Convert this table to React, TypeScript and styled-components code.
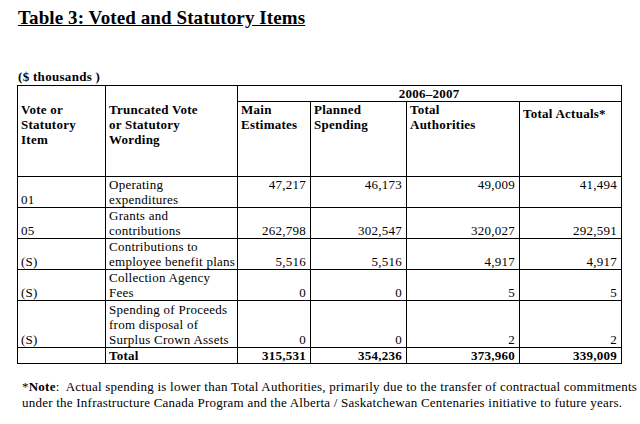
import React from "react";
import styled, { createGlobalStyle } from "styled-components";

const Global = createGlobalStyle`
  html, body { margin: 0; padding: 0; background: #fff; }
  body { font-family: "Liberation Serif", "Times New Roman", serif; color: #000; }
`;

const Page = styled.div`
  width: 640px;
  height: 424px;
  padding: 8px 0 0 0;
  box-sizing: border-box;
  overflow: hidden;
`;

const Title = styled.h1`
  margin: 0 0 0 18px;
  font-size: 19px;
  font-weight: bold;
  letter-spacing: 0.1px;
  text-decoration: underline;
  line-height: 20px;
`;

const Units = styled.div`
  margin: 42px 0 0 18px;
  font-size: 13px;
  font-weight: bold;
  letter-spacing: 0.3px;
  line-height: 14px;
`;

const Table = styled.table`
  margin: 1px 0 0 17px;
  border-collapse: collapse;
  table-layout: fixed;
  width: 604px;
  font-size: 13px;
  line-height: 15px;
  letter-spacing: 0.25px;
`;

const Cell = styled.td<{ $align?: "left" | "right" | "center"; $v?: "top" | "bottom"; $bold?: boolean; $pt?: number }>`
  border: 1px solid #000;
  padding: ${(p) => p.$pt ?? 0}px 4px 0 3px;
  text-align: ${(p) => p.$align ?? "left"};
  vertical-align: ${(p) => p.$v ?? "bottom"};
  font-weight: ${(p) => (p.$bold ? "bold" : "normal")};
  white-space: nowrap;
  overflow: hidden;
`;

const Row = styled.tr<{ $h: number }>`
  height: ${(p) => p.$h}px;
`;

const Note = styled.p`
  margin: 15px 0 0 22px;
  font-size: 13px;
  line-height: 16px;
  letter-spacing: 0.23px;
  white-space: nowrap;
`;

type DataRow = { vote: string; wording: string[]; nums: string[]; numV: "top" | "bottom"; h: number };

const rows: DataRow[] = [
  { vote: "01", wording: ["Operating", "expenditures"], nums: ["47,217", "46,173", "49,009", "41,494"], numV: "top", h: 31 },
  { vote: "05", wording: ["Grants and", "contributions"], nums: ["262,798", "302,547", "320,027", "292,591"], numV: "bottom", h: 31 },
  { vote: "(S)", wording: ["Contributions to", "employee benefit plans"], nums: ["5,516", "5,516", "4,917", "4,917"], numV: "bottom", h: 31 },
  { vote: "(S)", wording: ["Collection Agency", "Fees"], nums: ["0", "0", "5", "5"], numV: "bottom", h: 31 },
  { vote: "(S)", wording: ["Spending of Proceeds", "from disposal of", "Surplus Crown Assets"], nums: ["0", "0", "2", "2"], numV: "bottom", h: 47 },
];

const Lines = ({ lines }: { lines: string[] }) => (
  <>
    {lines.map((l, i) => (
      <React.Fragment key={i}>
        {i > 0 && <br />}
        {l}
      </React.Fragment>
    ))}
  </>
);

export default function App() {
  return (
    <Page>
      <Global />
      <Title>Table 3: Voted and Statutory Items</Title>
      <Units>($ thousands )</Units>
      <Table>
        <colgroup>
          <col style={{ width: 88 }} />
          <col style={{ width: 132 }} />
          <col style={{ width: 73 }} />
          <col style={{ width: 96 }} />
          <col style={{ width: 113 }} />
          <col style={{ width: 102 }} />
        </colgroup>
        <tbody>
          <Row $h={15}>
            <Cell rowSpan={2} $v="top" $bold $pt={16}><Lines lines={["Vote or", "Statutory", "Item"]} /></Cell>
            <Cell rowSpan={2} $v="top" $bold $pt={16}><Lines lines={["Truncated Vote", "or Statutory", "Wording"]} /></Cell>
            <Cell colSpan={4} $align="center" $v="top" $bold>2006–2007</Cell>
          </Row>
          <Row $h={75}>
            <Cell $v="top" $bold><Lines lines={["Main", "Estimates"]} /></Cell>
            <Cell $v="top" $bold><Lines lines={["Planned", "Spending"]} /></Cell>
            <Cell $v="top" $bold><Lines lines={["Total", "Authorities"]} /></Cell>
            <Cell $v="top" $bold $pt={4}>Total Actuals*</Cell>
          </Row>
          {rows.map((r, i) => (
            <Row $h={r.h} key={i}>
              <Cell>{r.vote}</Cell>
              <Cell><Lines lines={r.wording} /></Cell>
              {r.nums.map((n, j) => (
                <Cell key={j} $align="right" $v={r.numV}>{n}</Cell>
              ))}
            </Row>
          ))}
          <Row $h={16}>
            <Cell />
            <Cell $bold>Total</Cell>
            <Cell $align="right" $bold>315,531</Cell>
            <Cell $align="right" $bold>354,236</Cell>
            <Cell $align="right" $bold>373,960</Cell>
            <Cell $align="right" $bold>339,009</Cell>
          </Row>
        </tbody>
      </Table>
      <Note>
        *<b>Note</b>:&nbsp; Actual spending is lower than Total Authorities, primarily due to the transfer of contractual commitments
        <br />
        under the Infrastructure Canada Program and the Alberta / Saskatchewan Centenaries initiative to future years.
      </Note>
    </Page>
  );
}
